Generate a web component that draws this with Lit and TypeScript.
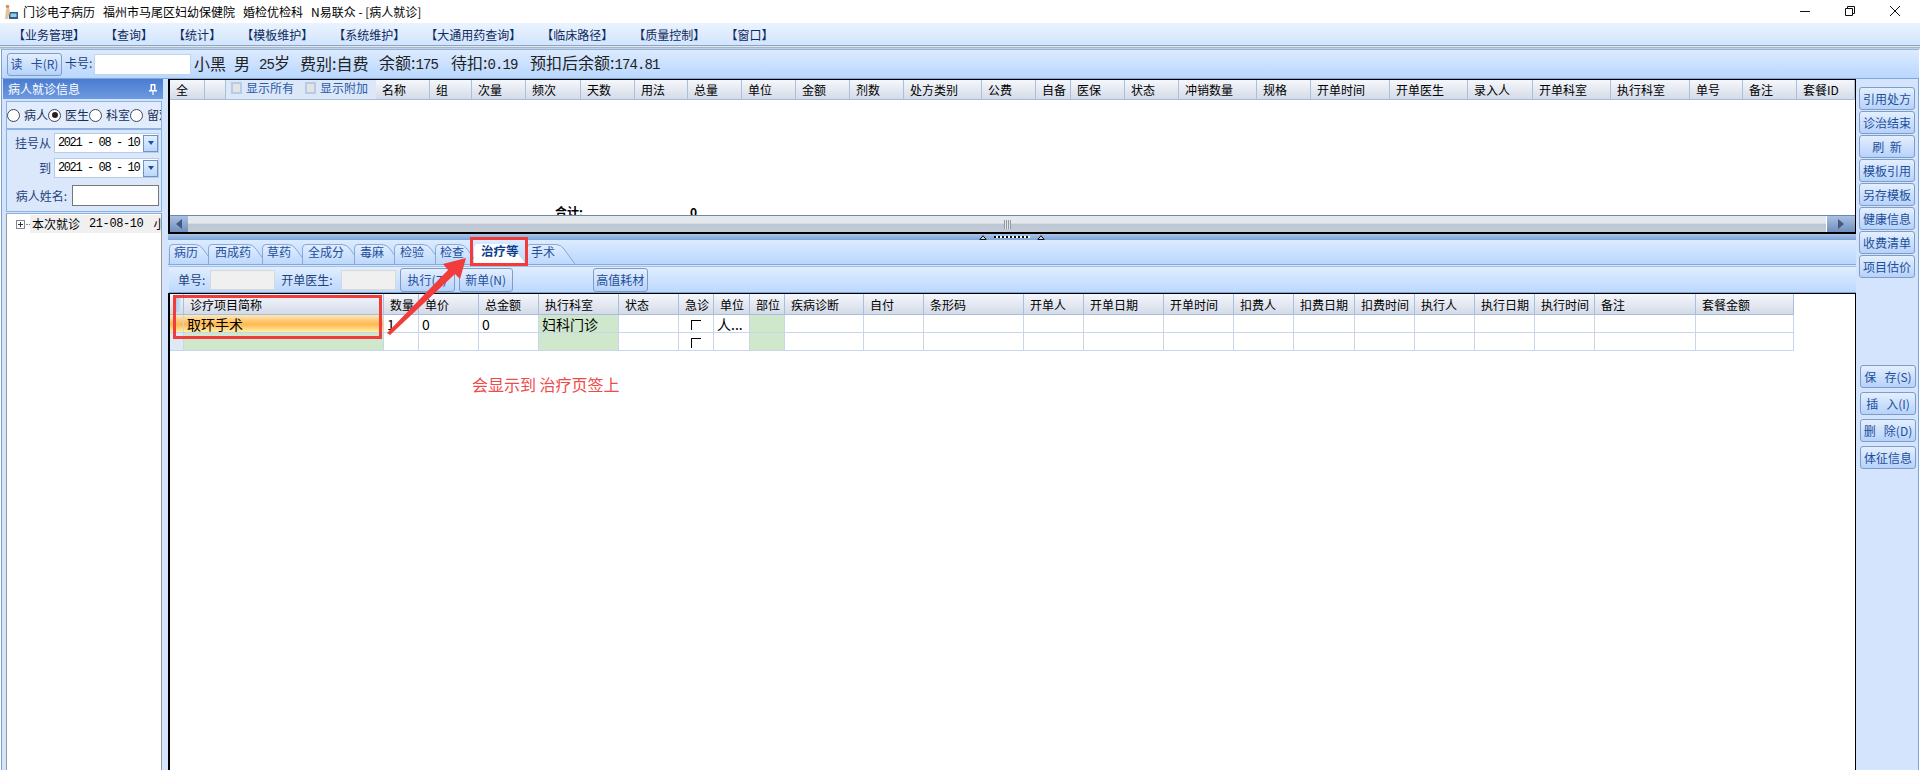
import { LitElement, html, css, svg } from "lit";
import { customElement } from "lit/decorators.js";

const topCols: [string, number][] = [
  ["全", 35], ["", 21], ["@", 150], ["名称", 54], ["组", 42], ["次量", 54], ["频次", 55], ["天数", 54], ["用法", 53],
  ["总量", 54], ["单位", 54], ["金额", 54], ["剂数", 54], ["处方类别", 78], ["公费", 54], ["自备", 35], ["医保", 54],
  ["状态", 54], ["冲销数量", 78], ["规格", 54], ["开单时间", 79], ["开单医生", 78], ["录入人", 65], ["开单科室", 78],
  ["执行科室", 79], ["单号", 53], ["备注", 54], ["套餐ID", 58],
];

const lowCols: [string, number][] = [
  ["", 14], ["诊疗项目简称", 200], ["数量", 35], ["单价", 60], ["总金额", 60], ["执行科室", 80], ["状态", 60], ["急诊", 35],
  ["单位", 36], ["部位", 35], ["疾病诊断", 79], ["自付", 60], ["条形码", 100], ["开单人", 60], ["开单日期", 80],
  ["开单时间", 70], ["扣费人", 60], ["扣费日期", 61], ["扣费时间", 60], ["执行人", 60], ["执行日期", 60],
  ["执行时间", 60], ["备注", 101], ["套餐金额", 98],
];

const menus = ["业务管理", "查询", "统计", "模板维护", "系统维护", "大通用药查询", "临床路径", "质量控制", "窗口"];

const tabs: { t: string; w: number; ov: number; pad: number; on?: boolean }[] = [
  { t: "病历", w: 46, ov: 0, pad: 5 },
  { t: "西成药", w: 60, ov: 7, pad: 7 },
  { t: "草药", w: 46, ov: 6, pad: 5 },
  { t: "全成分", w: 60, ov: 6, pad: 6 },
  { t: "毒麻", w: 48, ov: 8, pad: 6 },
  { t: "检验", w: 49, ov: 8, pad: 6 },
  { t: "检查", w: 44, ov: 8, pad: 5 },
  { t: "治疗等", w: 52, ov: 5, pad: 7, on: true },
  { t: "手术", w: 50, ov: 0, pad: 5 },
];

const sideA = ["引用处方", "诊治结束", "刷  新", "模板引用", "另存模板", "健康信息", "收费清单", "项目估价"];
const sideB = ["保   存(S)", "插   入(I)", "删   除(D)", "体征信息"];

@customElement("app-root")
export class AppRoot extends LitElement {
  static styles = css`
    :host { display: block; position: relative; width: 1920px; height: 770px; overflow: hidden; background: #fff;
      font-family: "Noto Sans CJK SC", "Liberation Sans", sans-serif; font-size: 12px; color: #000; line-height: 1; }
    * { box-sizing: border-box; }
    .m { font-family: "Liberation Mono", monospace; letter-spacing: -1.4px; }

    .title { height: 23px; display: flex; align-items: center; gap: 8px; padding-left: 3px; background: #fff; }
    .title svg.logo { margin-right: -4px; flex: none; }
    .win { margin-left: auto; margin-right: 18px; display: flex; align-items: center; height: 23px; }
    .win svg { display: block; }

    .menu { height: 23px; display: flex; align-items: center; gap: 20px; padding: 1px 0 0 13px; color: #102a5c;
      background: linear-gradient(#eaf3ff, #d2e5fd); border-bottom: 1px solid #7da7d9; }
    .sep { height: 3px; background: linear-gradient(#fff, #9aa6b4 60%, #e8f0fb); }

    .frame { width: 1918px; height: 721px; margin-left: 1px; background: #d3e4fc; border-left: 1px solid #7f9fc8; display: flex; flex-direction: column; }
    .tool { height: 30px; flex: none; display: flex; align-items: center; padding-left: 5px; color: #1f3f7a;
      background: linear-gradient(#dcebff, #b9d7fe); border-top: 1px solid #8fb2de; border-bottom: 1px solid #7ea6d8; }
    .btn { display: flex; align-items: center; justify-content: center; white-space: pre; color: #1d4f9c;
      background: linear-gradient(#e3effe, #c5dbfb 70%, #b5d2fb); border: 1px solid #7f9dc6; border-radius: 3px; }
    .card { width: 55px; height: 23px; }
    .lbl { margin: 0 0 2px 3px; width: 29px; }
    .inp { background: #fff; border: 1px solid #c2d3ea; }
    .cardno { width: 97px; height: 21px; }
    .info { display: flex; font-size: 16px; color: #222; margin: 0 0 3px 3px; white-space: pre; align-items: center; }
    .info span.s { display: block; }
    .info .m { font-size: 14px; letter-spacing: -0.9px; }

    .body { flex: 1; display: flex; min-height: 0; }

    .left { width: 162px; flex: none; display: flex; flex-direction: column; background: #d3e4fc; padding: 0 1px 0 1px; }
    .lhead { height: 20px; flex: none; display: flex; align-items: center; justify-content: space-between; padding: 0 6px 0 5px;
      color: #fff; background: linear-gradient(#4a7bd0, #6d9ae0); }
    .radios { margin: 2px 1px 0 3px; height: 28px; flex: none; display: flex; align-items: center; padding-left: 0; overflow: hidden;
      border: 1px solid #8db1e0; background: #e1ecfd; color: #1a2f5a; white-space: nowrap; }
    .radio { width: 41px; flex: none; display: flex; align-items: center; gap: 4px; }
    .dot { width: 13px; height: 13px; flex: none; border-radius: 50%; border: 1px solid #445; background: #fff; position: relative; }
    .dot.on::after { content: ""; position: absolute; left: 2.5px; top: 2.5px; width: 6px; height: 6px; border-radius: 50%; background: #222; }
    .dates { margin: 0 1px 0 3px; height: 83px; flex: none; display: flex; flex-direction: column; padding: 3px 2px 0 0;
      border: 1px solid #8db1e0; background: #dbe8fc; color: #1f3f7a; }
    .drow { display: flex; align-items: center; justify-content: flex-end; height: 20px; margin-bottom: 5px; gap: 3px; }
    .drow.name { margin-top: 2px; height: 21px; gap: 5px; }
    .date { width: 105px; height: 20px; display: flex; align-items: center; justify-content: space-between; padding: 0 0 0 3px; color: #000; background: #fff; border: 1px solid #b5cbe8; white-space: pre; }
    .dd { width: 15px; height: 17px; flex: none; display: flex; align-items: center; justify-content: center; background: linear-gradient(#e3effe, #bcd6fb); border: 1px solid #6f93c4; }
    .dd::after { content: ""; border: 3px solid transparent; border-top: 4px solid #1d4f9c; border-bottom: 0; }
    .nameinp { width: 87px; height: 21px; background: #fff; border: 1px solid #777; }
    .tree { flex: 1; margin: 1px 1px 0 3px; background: #fff; border-left: 1px solid #999; border-right: 1px solid #999; border-top: 1px solid #8db1e0; padding-top: 1px; }
    .titem { display: flex; align-items: center; height: 18px; overflow: hidden; padding-left: 9px; white-space: pre; }
    .plus { width: 9px; height: 9px; flex: none; border: 1px solid #888; position: relative; background: #fff; }
    .plus::before { content: ""; position: absolute; left: 1px; right: 1px; top: 3px; height: 1px; background: #235; }
    .plus::after { content: ""; position: absolute; top: 1px; bottom: 1px; left: 3px; width: 1px; background: #235; }
    .dots { width: 4px; margin-left: 1px; border-top: 1px dotted #888; flex: none; }
    .tlabel { flex: 1; min-width: 0; height: 18px; background: #f0f0f0; display: flex; align-items: center; padding-left: 2px; overflow: hidden; }
    .tlabel .m { letter-spacing: -0.4px; font-size: 12px; margin: 0 10px 0 9px; }

    .center { width: 1688px; flex: none; margin-left: 4px; display: flex; flex-direction: column; min-height: 0; }
    .pane1 { height: 155px; flex: none; display: flex; flex-direction: column; background: #fff; border-top: 1px solid #000; border-left: 2px solid #000; border-right: 1px solid #000; border-bottom: 2px solid #000; }
    .hrow { display: flex; flex: none; height: 20px; background: linear-gradient(#f5f7fb, #d4dbe8); border-bottom: 1px solid #a5bedc; }
    .hcell { flex: none; display: flex; align-items: center; padding: 1px 0 0 6px; border-right: 1px solid #a9bfdc; white-space: nowrap; overflow: hidden; }
    .chk { background: #dce7f7; border-right: 0; padding: 0 0 4px 0; color: #2a5bab; gap: 0; }
    .cb { width: 11px; height: 12px; border: 2px solid #b7cbe6; background: #e4e4e4; flex: none; margin: 0 4px 0 5px; }
    .chk .t2 { margin-right: 6px; }
    .spacer1 { flex: 1; position: relative; overflow: hidden; }
    .sum { position: absolute; top: 106px; font-weight: 700; white-space: nowrap; }
    .sb { height: 17px; flex: none; display: flex; border-top: 1px solid #6f87ad; }
    .sbtn { flex: none; display: flex; align-items: center; justify-content: center; background: linear-gradient(#a9c0e2, #6f8fbf); }
    .sbtn.l { width: 18px; }
    .sbtn.r { width: 28px; }
    .track { flex: 1; display: flex; align-items: center; justify-content: center; background: linear-gradient(#e6e9ec 45%, #bcc7d3 50%, #c2ccd7); border-right: 1px solid #fff; }
    .grip { width: 7px; height: 9px; background: repeating-linear-gradient(90deg, #8b98a8 0 1px, #e6e9ec 1px 2px); }

    .split { height: 6px; flex: none; display: flex; align-items: center; justify-content: center; background: linear-gradient(#a9c6ea, #7da4d8); }
    .split svg { display: block; }
    .ddots { width: 36px; height: 2px; margin: 0 7px; background: repeating-linear-gradient(90deg, #111 0 2px, #fff 2px 4px); }

    .tabs { height: 25px; flex: none; display: flex; align-items: flex-end; background: linear-gradient(#dcebff, #b9d7fe); border-bottom: 1px solid #86a9d6; padding-left: 1px; }
    .tab { height: 21px; flex: none; position: relative; color: #1d4f9c; display: flex; align-items: center; white-space: nowrap; padding-bottom: 4px; }
    .tab svg { position: absolute; left: 0; top: 0; }
    .tab span { position: relative; }
    .tab.on { color: #0f3f8c; font-weight: 700; font-size: 12.5px; }

    .bar2 { height: 27px; flex: none; margin: 1px 0 0 1px; display: flex; align-items: center; color: #1f3f7a; background: linear-gradient(#e1eefe, #bcd8ff); border-top: 1px solid #a4c1e6; border-bottom: 1px solid #7ea6d8; padding-left: 9px; }
    .gray { height: 20px; background: #f0f0f0; border: 1px solid #d8d8d8; flex: none; }
    .bar2 .btn { height: 24px; flex: none; }

    .pane2 { flex: 1; background: #fff; border-top: 1px solid #000; border-left: 2px solid #000; border-right: 1px solid #000; min-height: 0; }
    .lh { height: 21px; width: 1624px; }
    .lh .hcell.ind { padding: 0; justify-content: center; }
    .ind i { width: 8px; height: 15px; display: block; background: linear-gradient(90deg, #9dbce6, #d6e4f6); }
    .row { display: flex; width: 1624px; height: 18px; }
    .cell { flex: none; height: 18px; border-right: 1px solid #c9d5e8; border-bottom: 1px solid #c9d5e8; font-size: 14px; display: flex; align-items: center; padding-left: 3px; white-space: nowrap; overflow: hidden; }
    .cell.g { background: #cfe8cb; }
    .cell.o { background: linear-gradient(#fde8bd, #ffc870 35%, #ffb84f 55%, #fff0a8); }
    .cell.ii { background: #dfe8f5; padding: 0; }
    .cell.oi { background: linear-gradient(#fde8bd, #ffb84f 55%, #fff0a8); padding: 0; }
    .tick { width: 10px; height: 10px; border-top: 1px solid #000; border-left: 1px solid #000; margin: 2px 0 0 9px; }

    .right { flex: 1; display: flex; flex-direction: column; padding: 8px 0 0 3px; background: #d3e4fc; border-right: 1px solid #7ea6d8; }
    .right .btn { width: 56px; height: 23px; flex: none; margin-bottom: 1px; }
    .gap { height: 86px; flex: none; }
    .right .b2 { margin-left: 1px; margin-bottom: 4px; }

    .box { position: absolute; border: 3px solid #f23c3c; pointer-events: none; }
    .b1 { left: 470px; top: 237px; width: 58px; height: 29px; }
    .b2x { left: 173px; top: 295px; width: 209px; height: 44px; }
    .arrow { position: absolute; left: 0; top: 0; pointer-events: none; }
    .note { position: absolute; left: 472px; top: 375px; font-size: 16px; color: #f04a4a; white-space: pre; line-height: 18px; }
  `;

  private tabShape(w: number, on: boolean) {
    const h = 21;
    const d = `M.5 ${h} V5 Q.5 1.5 4 1.5 H${w - 20} Q${w - 15} 1.5 ${w - 12} 6 L${w - 1} ${h}`;
    const fill = on ? "#fff" : "url(#tg)";
    return html`<svg width=${w} height=${h} viewBox="0 0 ${w} ${h}">
      <defs><linearGradient id="tg" x1="0" y1="0" x2="0" y2="1"><stop offset="0" stop-color="#e2eeff"/><stop offset="1" stop-color="#bdd8fd"/></linearGradient></defs>
      ${svg`<path d=${d} fill=${fill} stroke=${on ? "#fff" : "#86a9d6"}/>`}
    </svg>`;
  }

  private splitTri() {
    return html`<svg width="8" height="5" viewBox="0 0 8 5"><path d="M4 .7 L7.2 4.5 H.8 Z" fill="#bcd4f2" stroke="#111"/></svg>`;
  }

  render() {
    const info: [unknown, number][] = [
      [html`小黑`, 40], [html`男`, 25], [html`<span class="m">25</span>岁`, 41], [html`费别:自费`, 79],
      [html`余额:<span class="m">175</span>`, 72], [html`待扣:<span class="m">0.19</span>`, 79],
      [html`预扣后余额:<span class="m">174.81</span>`, 138],
    ];
    return html`
      <div class="title">
        <svg class="logo" width="16" height="16" viewBox="0 0 16 16">
          <rect x="6" y="8" width="9" height="7" fill="#2f5f86"/><rect x="7.5" y="9.5" width="6" height="3.5" fill="#8fd0e6"/>
          <path d="M2 15 L3 5 L6 3 L7 8 L5 15 Z" fill="#e6c49a"/><circle cx="4.5" cy="2.5" r="1.8" fill="#c8955f"/>
        </svg>
        <span>门诊电子病历</span><span>福州市马尾区妇幼保健院</span><span>婚检优检科</span><span>N易联众 - [病人就诊]</span>
        <div class="win">
          <svg width="103" height="23" viewBox="0 0 103 23" fill="none" stroke="#111" stroke-width="1">
            <path d="M1 11.5 H11"/>
            <path d="M46.5 8.5 h7 v7 h-7 z M48.5 8 V6.5 h7 v7 H54"/>
            <path d="M91 6 L101 16 M101 6 L91 16"/>
          </svg>
        </div>
      </div>
      <div class="menu">${menus.map((m) => html`<span>【${m}】</span>`)}</div>
      <div class="sep"></div>
      <div class="frame">
        <div class="tool">
          <div class="btn card">读   卡(R)</div>
          <div class="lbl">卡号:</div>
          <div class="inp cardno"></div>
          <div class="info">${info.map(([c, w]) => html`<span class="s" style="width:${w}px">${c}</span>`)}</div>
        </div>
        <div class="body">
          <div class="left">
            <div class="lhead"><span>病人就诊信息</span>
              <svg width="8" height="11" viewBox="0 0 8 11" fill="#fff"><path d="M1.5 0 H6.5 V6 H8 V7.5 H4.6 V11 H3.4 V7.5 H0 V6 H1.5 Z M3 1.5 V6 H5 V1.5 Z" fill-rule="evenodd"/></svg>
            </div>
            <div class="radios">
              <div class="radio"><span class="dot"></span>病人</div>
              <div class="radio"><span class="dot on"></span>医生</div>
              <div class="radio"><span class="dot"></span>科室</div>
              <div class="radio"><span class="dot"></span>留观</div>
            </div>
            <div class="dates">
              <div class="drow"><span>挂号从</span><div class="date"><span class="m">2021 - 08 - 10</span><i class="dd"></i></div></div>
              <div class="drow"><span>到</span><div class="date"><span class="m">2021 - 08 - 10</span><i class="dd"></i></div></div>
              <div class="drow name"><span>病人姓名:</span><div class="nameinp"></div></div>
            </div>
            <div class="tree">
              <div class="titem"><span class="plus"></span><span class="dots"></span>
                <div class="tlabel">本次就诊<span class="m">21-08-10</span>小黑</div></div>
            </div>
          </div>
          <div class="center">
            <div class="pane1">
              <div class="hrow">
                ${topCols.map(([t, w]) => t === "@"
                  ? html`<div class="hcell chk" style="width:${w}px"><i class="cb"></i><span class="t2">显示所有</span><i class="cb"></i><span>显示附加</span></div>`
                  : html`<div class="hcell" style="width:${w}px">${t}</div>`)}
              </div>
              <div class="spacer1">
                <span class="sum" style="left:385px">合计:</span>
                <span class="sum" style="left:520px">0</span>
              </div>
              <div class="sb">
                <div class="sbtn l"><svg width="6" height="10"><path d="M6 0 V10 L0 5 Z" fill="#445a7c"/></svg></div>
                <div class="track"><i class="grip"></i></div>
                <div class="sbtn r"><svg width="6" height="10"><path d="M0 0 V10 L6 5 Z" fill="#445a7c"/></svg></div>
              </div>
            </div>
            <div class="split">${this.splitTri()}<i class="ddots"></i>${this.splitTri()}</div>
            <div class="tabs">
              ${tabs.map((t) => html`<div class="tab ${t.on ? "on" : ""}" style="width:${t.w}px;margin-left:${-t.ov}px;padding-left:${t.pad}px">
                ${this.tabShape(t.w, !!t.on)}<span>${t.t}</span></div>`)}
            </div>
            <div class="bar2">
              <span>单号:</span>
              <i class="gray" style="width:65px;margin-left:5px"></i>
              <span style="margin-left:6px">开单医生:</span>
              <i class="gray" style="width:55px;margin-left:8px"></i>
              <div class="btn" style="width:55px;margin-left:4px">执行(Z)</div>
              <div class="btn" style="width:54px;margin-left:4px">新单(N)</div>
              <div class="btn" style="width:55px;margin-left:80px">高值耗材</div>
            </div>
            <div class="pane2">
              <div class="hrow lh">
                ${lowCols.map(([t, w], i) => i === 0
                  ? html`<div class="hcell ind" style="width:${w}px"><i></i></div>`
                  : html`<div class="hcell" style="width:${w}px">${t}</div>`)}
              </div>
              <div class="row">
                ${lowCols.map(([t, w], i) => this.cell(t, w, i, 0))}
              </div>
              <div class="row">
                ${lowCols.map(([t, w], i) => this.cell(t, w, i, 1))}
              </div>
            </div>
          </div>
          <div class="right">
            ${sideA.map((s) => html`<div class="btn">${s}</div>`)}
            <div class="gap"></div>
            ${sideB.map((s) => html`<div class="btn b2">${s}</div>`)}
          </div>
        </div>
      </div>

      <div class="box b1"></div>
      <div class="box b2x"></div>
      <svg class="arrow" width="1920" height="770">
        <polygon points="387,333 448,270 443,264 466,258 460,279 455,274 390,335" fill="#f23c3c"/>
      </svg>
      <div class="note">会显示到 治疗页签上</div>
    `;
  }

  private cell(t: string, w: number, i: number, r: number) {
    const st = `width:${w}px`;
    if (i === 0) return html`<div class="cell ${r === 0 ? "oi" : "ii"}" style=${st}></div>`;
    if (i === 1) return r === 0
      ? html`<div class="cell o" style=${st}>取环手术</div>`
      : html`<div class="cell g" style=${st}></div>`;
    if (t === "执行科室" && i === 5) return html`<div class="cell g" style=${st}>${r === 0 ? "妇科门诊" : ""}</div>`;
    if (t === "部位") return html`<div class="cell g" style=${st}></div>`;
    if (t === "急诊") return html`<div class="cell" style=${st}><i class="tick"></i></div>`;
    if (r === 0) {
      if (i === 2) return html`<div class="cell" style=${st}>1</div>`;
      if (i === 3 || i === 4) return html`<div class="cell" style=${st}>0</div>`;
      if (t === "单位") return html`<div class="cell" style=${st}>人...</div>`;
    }
    return html`<div class="cell" style=${st}></div>`;
  }
}
